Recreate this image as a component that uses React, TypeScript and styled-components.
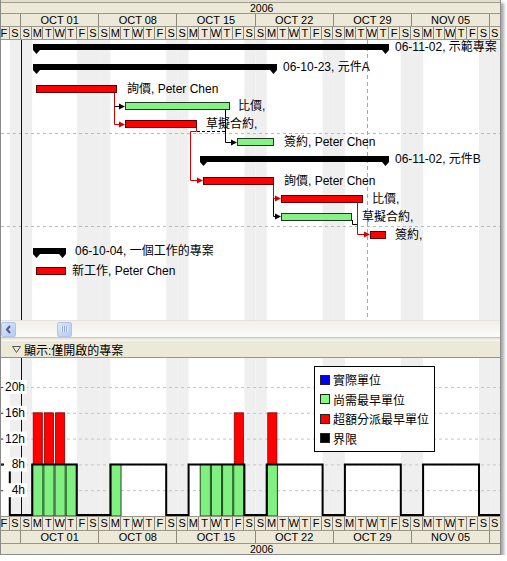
import React from "react";
import styled, { createGlobalStyle } from "styled-components";

// time axis: one day = 11.17px, Sunday Oct 1 2006 starts at page x 21
const DAY = 11.17;
const ORIGIN = 21;
const FIRST = -2; // Fri Sep 29
const LAST = 42; // Sun Nov 12
const HOLIDAYS = [5]; // Oct 06

const dayX = (i: number) => ORIGIN + i * DAY;
const isOff = (i: number) => {
  const dow = ((i % 7) + 7) % 7;
  return dow === 0 || dow === 6 || HOLIDAYS.includes(i);
};
const DAYS = Array.from({ length: LAST - FIRST + 1 }, (_, k) => FIRST + k);
const LETTERS = ["S", "M", "T", "W", "T", "F", "S"];
const WEEKS = [
  { label: "", days: 2 },
  { label: "OCT 01", days: 7 },
  { label: "OCT 08", days: 7 },
  { label: "OCT 15", days: 7 },
  { label: "OCT 22", days: 7 },
  { label: "OCT 29", days: 7 },
  { label: "NOV 05", days: 7 },
  { label: "", days: 3 },
];
const SHIFT = dayX(FIRST) - 1;

const RED = "#ff0000";
const GREEN = "#88f088";
const LINK_RED = "#d40000";

interface Summary {
  kind: "summary";
  x0: number;
  x1: number;
  y: number;
  label: string;
  lx: number;
}
interface Task {
  kind: "task";
  x0: number;
  x1: number;
  y: number;
  tone: "red" | "green";
  label: string;
  lx: number;
}
type Row = Summary | Task;

const ROWS: Row[] = [
  { kind: "summary", x0: 33, x1: 389, y: 44, label: "06-11-02, 示範專案", lx: 395 },
  { kind: "summary", x0: 33, x1: 277, y: 64, label: "06-10-23, 元件A", lx: 283 },
  { kind: "task", tone: "red", x0: 36, x1: 117, y: 85, label: "詢價, Peter Chen", lx: 127 },
  { kind: "task", tone: "green", x0: 125, x1: 230, y: 102, label: "比價,", lx: 238 },
  { kind: "task", tone: "red", x0: 125, x1: 197, y: 120, label: "草擬合約,", lx: 206 },
  { kind: "task", tone: "green", x0: 237, x1: 274, y: 138, label: "簽約, Peter Chen", lx: 284 },
  { kind: "summary", x0: 200, x1: 389, y: 156, label: "06-11-02, 元件B", lx: 395 },
  { kind: "task", tone: "red", x0: 203, x1: 274, y: 177, label: "詢價, Peter Chen", lx: 284 },
  { kind: "task", tone: "red", x0: 281, x1: 363, y: 195, label: "比價,", lx: 372 },
  { kind: "task", tone: "green", x0: 281, x1: 352, y: 213, label: "草擬合約,", lx: 362 },
  { kind: "task", tone: "red", x0: 370, x1: 386, y: 231, label: "簽約,", lx: 395 },
  { kind: "summary", x0: 33, x1: 66, y: 248, label: "06-10-04, 一個工作的專案", lx: 75 },
  { kind: "task", tone: "red", x0: 36, x1: 66, y: 267, label: "新工作, Peter Chen", lx: 72 },
];

const LINKS = [
  { d: "M114.5 93V124.5H120", c: LINK_RED },
  { d: "M114.5 106.5H120", c: "#000" },
  { d: "M225.5 110V142.5H232", c: "#000" },
  { d: "M196.5 128V131.5H190.5V180.5H198", c: LINK_RED },
  { d: "M197 131.5H225", c: "#000", dash: true },
  { d: "M273.5 184V198.5H276", c: LINK_RED },
  { d: "M273.5 198.5V216.5H276", c: "#000" },
  { d: "M357.5 202V234.5H365", c: LINK_RED },
  { d: "M352.5 220V224.5H357", c: "#000" },
];
const ARROWS = [
  { x: 125, y: 124.5, c: LINK_RED },
  { x: 125, y: 106.5, c: "#000" },
  { x: 237, y: 142.5, c: "#000" },
  { x: 203, y: 180.5, c: LINK_RED },
  { x: 281, y: 198.5, c: LINK_RED },
  { x: 281, y: 216.5, c: "#000" },
  { x: 370, y: 234.5, c: LINK_RED },
];

// resource chart
const BASE = 516;
const PER_HOUR = 6.45;
const yH = (h: number) => BASE - h * PER_HOUR;
const WORK_DAYS = [1, 2, 3, 4, 8, 16, 17, 18, 19, 22];
const OVER_DAYS = [1, 2, 3, 19, 22];
const GRID_HOURS = [20, 16, 12, 8, 4];

const capacityPath = (() => {
  const lvl = (i: number) => (isOff(i) ? BASE - 1 : yH(8));
  let prev = lvl(FIRST);
  let d = `M0 ${prev}`;
  for (let i = FIRST + 1; i <= LAST + 1; i++) {
    const v = lvl(i);
    if (v !== prev) {
      d += `H${dayX(i).toFixed(1)}V${v.toFixed(1)}`;
      prev = v;
    }
  }
  return d + "H512";
})();

const LEGEND = [
  { color: "#0000ff", text: "實際單位" },
  { color: "#80ff80", text: "尚需最早單位" },
  { color: "#ff0000", text: "超額分派最早單位" },
  { color: "#000000", text: "界限" },
];

const GlobalStyle = createGlobalStyle`
  body {
    margin: 0;
    background: #fff;
  }
`;

const Window = styled.div`
  width: 499px;
  border: 1px solid #8b8b8b;
  border-top: none;
  box-shadow: 3px 3px 3px rgba(0, 0, 0, 0.35);
  background: #fff;
  font-family: "Liberation Sans", "Noto Sans CJK TC", sans-serif;
  display: flex;
  flex-direction: column;
`;

const TopEdge = styled.div`
  height: 2px;
  background: #e2dfd0;
  border-bottom: 1px solid #a19e8f;
`;

const Scale = styled.div`
  background: #ece9d8;
  font-size: 11px;
  color: #000;
  overflow: hidden;
`;

const ScaleRow = styled.div<{ $h: number; $edge: "top" | "bottom"; $shift?: number }>`
  display: flex;
  height: ${(p) => p.$h}px;
  line-height: ${(p) => p.$h}px;
  margin-left: ${(p) => p.$shift ?? 0}px;
  border-${(p) => p.$edge}: 1px solid #9a978a;
`;

const YearRow = styled(ScaleRow)`
  padding-left: 249px;
  font-size: 10.5px;
`;

const Cell = styled.div<{ $w: number }>`
  flex: 0 0 ${(p) => p.$w}px;
  box-sizing: border-box;
  border-right: 1px solid #8d8a7c;
  text-align: center;
  white-space: nowrap;
  overflow: hidden;
`;

const Canvas = styled.svg`
  display: block;
  font-family: "Liberation Sans", "Noto Sans CJK TC", sans-serif;
  font-size: 12px;
`;

const HScroll = styled.div`
  height: 17px;
  box-sizing: border-box;
  display: flex;
  align-items: center;
  background: linear-gradient(#f1efe7, #fcfcfa);
  border-top: 1px solid #e6e4dc;
`;

const ScrollButton = styled.div<{ $gap?: number }>`
  width: 15px;
  height: 15px;
  margin-left: ${(p) => p.$gap ?? 0}px;
  box-sizing: border-box;
  border: 1px solid #b1c4ef;
  border-radius: 2px;
  background: linear-gradient(135deg, #dbe5fd, #b6caf6);
  display: flex;
  align-items: center;
  justify-content: center;
`;

const Grip = styled.span`
  width: 7px;
  height: 6px;
  background: repeating-linear-gradient(90deg, #f0f4fe 0 1px, #8ea7dc 1px 2px);
`;

const Splitter = styled.div`
  height: 4px;
  box-sizing: border-box;
  background: #ece9d8;
  border-top: 1px solid #c9c6b6;
  border-bottom: 1px solid #fbfaf6;
`;

const PaneHeader = styled.div`
  height: 17px;
  box-sizing: border-box;
  display: flex;
  align-items: center;
  gap: 3px;
  padding-left: 11px;
  background: #ece9d8;
  border-bottom: 1px solid #96937f;
  font-size: 12px;
  color: #000;
`;

const ChartPane = styled.div`
  position: relative;
  height: 158px;
`;

const Legend = styled.div`
  position: absolute;
  left: 313px;
  top: 8px;
  width: 121px;
  height: 86px;
  box-sizing: border-box;
  padding: 3px 0 0 5px;
  background: #fff;
  border: 1px solid #000;
  font-size: 12px;
  color: #000;
`;

const LegendItem = styled.div`
  display: flex;
  align-items: center;
  gap: 3px;
  height: 19.5px;
  white-space: nowrap;
`;

const Swatch = styled.span<{ $c: string }>`
  width: 10px;
  height: 10px;
  box-sizing: border-box;
  background: ${(p) => p.$c};
  border: 1px solid #222;
`;

const DayCells: React.FC = () => (
  <>
    {DAYS.map((i) => (
      <Cell key={i} $w={DAY}>
        {LETTERS[((i % 7) + 7) % 7]}
      </Cell>
    ))}
  </>
);

const WeekCells: React.FC = () => (
  <>
    {WEEKS.map((w, k) => (
      <Cell key={k} $w={w.days * DAY}>
        {w.label}
      </Cell>
    ))}
  </>
);

const Bands: React.FC<{ y: number; h: number }> = ({ y, h }) => (
  <g fill="#efefef">
    {DAYS.filter(isOff).map((i) => (
      <rect key={i} x={dayX(i)} y={y} width={DAY} height={h} />
    ))}
  </g>
);

const SummaryBar: React.FC<{ row: Summary }> = ({ row }) => {
  const yb = row.y + 6;
  return (
    <g fill="#000">
      <rect x={row.x0} y={row.y} width={row.x1 - row.x0} height={6} />
      <polygon points={`${row.x0},${yb} ${row.x0 + 7},${yb} ${row.x0 + 3.5},${yb + 4}`} />
      <polygon points={`${row.x1 - 7},${yb} ${row.x1},${yb} ${row.x1 - 3.5},${yb + 4}`} />
    </g>
  );
};

const TaskBar: React.FC<{ row: Task }> = ({ row }) => (
  <rect
    x={row.x0 + 0.5}
    y={row.y + 0.5}
    width={row.x1 - row.x0 - 1}
    height={7}
    fill={row.tone === "red" ? RED : GREEN}
    stroke={row.tone === "red" ? "#5a0000" : "#1c3a1c"}
  />
);

const GanttBody: React.FC = () => (
  <Canvas width={499} height={280} viewBox="1 40 499 280">
    <rect x={1} y={40} width={499} height={280} fill="#fff" />
    <Bands y={40} h={280} />
    <g stroke="#b8b8b8" strokeDasharray="3 3">
      <line x1={1} x2={500} y1={133.5} y2={133.5} />
      <line x1={1} x2={500} y1={226.5} y2={226.5} />
    </g>
    <line x1={367.5} x2={367.5} y1={40} y2={320} stroke="#a8a8a8" strokeDasharray="4 3" />
    <line x1={21.5} x2={21.5} y1={40} y2={320} stroke="#000080" />
    {LINKS.map((l, k) => (
      <path key={k} d={l.d} fill="none" stroke={l.c} strokeDasharray={l.dash ? "3 2" : undefined} />
    ))}
    {ARROWS.map((a, k) => (
      <polygon key={k} points={`${a.x - 6},${a.y - 3} ${a.x},${a.y} ${a.x - 6},${a.y + 3}`} fill={a.c} />
    ))}
    {ROWS.map((row, k) => (
      <g key={k}>
        {row.kind === "summary" ? <SummaryBar row={row} /> : <TaskBar row={row} />}
        <text x={row.lx} y={row.kind === "summary" ? row.y + 3 : row.y + 3.5} dominantBaseline="central" fill="#000">
          {row.label}
        </text>
      </g>
    ))}
  </Canvas>
);

const LoadChart: React.FC = () => (
  <Canvas width={499} height={158} viewBox="1 358 499 158">
    <rect x={1} y={358} width={499} height={158} fill="#fff" />
    <Bands y={358} h={158} />
    <line x1={21.5} x2={21.5} y1={358} y2={516} stroke="#000080" />
    <g stroke="#c4c4c4" strokeDasharray="3 3">
      {GRID_HOURS.map((h) => (
        <line key={h} x1={1} x2={500} y1={yH(h) + 0.5} y2={yH(h) + 0.5} />
      ))}
    </g>
    {OVER_DAYS.map((i) => (
      <rect key={i} x={dayX(i) + 1} y={yH(16)} width={DAY - 2} height={8 * PER_HOUR} fill={RED} stroke="#8a0000" strokeWidth={0.8} />
    ))}
    {WORK_DAYS.map((i) => (
      <rect key={i} x={dayX(i) + 0.5} y={yH(8)} width={DAY - 1} height={8 * PER_HOUR} fill="#80f080" stroke="#1d4d1d" />
    ))}
    <path d={capacityPath} fill="none" stroke="#000" strokeWidth={2} />
    {GRID_HOURS.map((h) => (
      <g key={h}>
        <line x1={1} x2={3} y1={yH(h) + 0.5} y2={yH(h) + 0.5} stroke="#444" />
        <rect x={4} y={yH(h) - 7} width={23} height={14} fill="#fff" />
        <text x={25} y={yH(h)} textAnchor="end" dominantBaseline="central" fill="#000">
          {h}h
        </text>
      </g>
    ))}
  </Canvas>
);

const App: React.FC = () => {
  return (
    <>
      <GlobalStyle />
      <Window>
        <TopEdge />
        <Scale>
          <YearRow $h={10} $edge="bottom">2006</YearRow>
          <ScaleRow $h={12} $edge="bottom" $shift={SHIFT}>
            <WeekCells />
          </ScaleRow>
          <ScaleRow $h={12} $edge="bottom" $shift={SHIFT}>
            <DayCells />
          </ScaleRow>
        </Scale>
        <GanttBody />
        <HScroll>
          <ScrollButton>
            <svg width="7" height="9" viewBox="0 0 7 9">
              <path d="M5 1L2 4.5L5 8" fill="none" stroke="#4d6185" strokeWidth="2" />
            </svg>
          </ScrollButton>
          <ScrollButton $gap={41}>
            <Grip />
          </ScrollButton>
        </HScroll>
        <Splitter />
        <PaneHeader>
          <svg width="9" height="7" viewBox="0 0 9 7">
            <path d="M0.5 0.5H8.5L4.5 6.5Z" fill="none" stroke="#555" />
          </svg>
          顯示:僅開啟的專案
        </PaneHeader>
        <ChartPane>
          <LoadChart />
          <Legend>
            {LEGEND.map((item) => (
              <LegendItem key={item.text}>
                <Swatch $c={item.color} />
                {item.text}
              </LegendItem>
            ))}
          </Legend>
        </ChartPane>
        <Scale>
          <ScaleRow $h={13} $edge="top" $shift={SHIFT}>
            <DayCells />
          </ScaleRow>
          <ScaleRow $h={12} $edge="top" $shift={SHIFT}>
            <WeekCells />
          </ScaleRow>
          <YearRow $h={10} $edge="top">2006</YearRow>
        </Scale>
      </Window>
    </>
  );
};

export default App;
